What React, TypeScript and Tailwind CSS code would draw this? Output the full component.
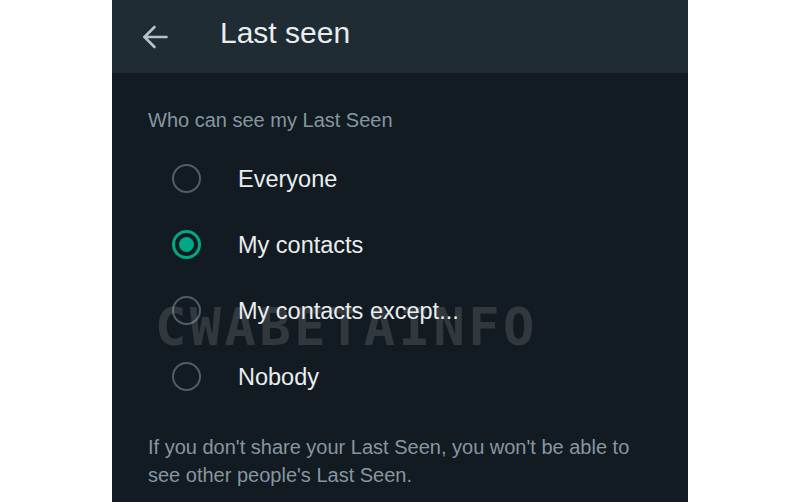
const options = ['Everyone', 'My contacts', 'My contacts except...', 'Nobody'];
const selected = 'My contacts';

function BackArrow() {
  return (
    <svg width="26" height="24" viewBox="0 0 26 24" fill="none" stroke="#b8c2c8" strokeWidth="2.6" strokeLinecap="round" strokeLinejoin="round">
      <path d="M24.5 12H2.5" />
      <path d="M12.5 2L2.5 12L12.5 22" />
    </svg>
  );
}

function Radio({ checked }: { checked: boolean }) {
  if (checked) {
    return (
      <div className="w-[29px] h-[29px] rounded-full border-[3px] border-[#00a884] flex items-center justify-center">
        <div className="w-[15px] h-[15px] rounded-full bg-[#00a884]" />
      </div>
    );
  }
  return <div className="w-[29px] h-[29px] rounded-full border-[2.5px] border-[#4e5d66]" />;
}

export default function App() {
  return (
    <div className="w-[800px] h-[502px] bg-white flex justify-center overflow-hidden font-['Liberation_Sans',Arial,sans-serif]">
      <div className="w-[576px] h-full bg-[#121b22] flex flex-col relative">
        <div className="h-[73px] bg-[#1f2c33] flex items-center pl-[30px] shrink-0">
          <BackArrow />
          <h1 className="ml-[52px] text-[30px] text-[#e9edef] leading-none -mt-[8px]">Last seen</h1>
        </div>

        <div className="pl-[36px] pt-[33px]">
          <p className="text-[20px] leading-[28px] text-[#8696a0]">Who can see my Last Seen</p>

          <div className="mt-[11px] flex flex-col">
            {options.map((opt) => (
              <div key={opt} className="h-[66px] flex items-center pl-[24px]">
                <Radio checked={opt === selected} />
                <span className="ml-[37px] mt-[3px] text-[23.5px] text-[#e9edef]">{opt}</span>
              </div>
            ))}
          </div>

          <p className="mt-[24px] text-[20px] leading-[28px] text-[#8696a0] pr-[40px]">
            If you don't share your Last Seen, you won't be able to see other people's Last Seen.
          </p>
        </div>

        <div className="absolute left-[43px] top-[301px] text-[52px] font-bold tracking-[3.5px] text-white/[0.13] font-['DejaVu_Sans_Mono',monospace] leading-none pointer-events-none select-none">
          CWABETAINFO
        </div>
      </div>
    </div>
  );
}
